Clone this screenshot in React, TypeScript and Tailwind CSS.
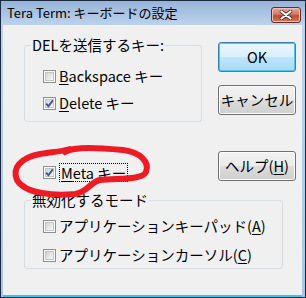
import React from "react";

const font = "font-['Noto_Sans_CJK_JP','Noto_Sans',sans-serif]";

// Windows 7 style checkbox
const Check: React.FC<{ checked?: boolean }> = ({ checked }) => (
  <span className="relative flex h-[13px] w-[13px] shrink-0 items-center justify-center border border-[#8e8f8f] bg-white">
    <span className="h-[9px] w-[9px] border border-[#c4c4c4] bg-[linear-gradient(135deg,#d4d4d4,#f7f7f7)]" />
    {checked && (
      <svg className="absolute left-0 top-0" width="11" height="11" viewBox="0 0 11 11">
        <path d="M2.2 5.6 L4.4 8.2 L8.8 2.4" fill="none" stroke="#3b56a0" strokeWidth="1.9" />
      </svg>
    )}
  </span>
);

const Row: React.FC<{ checked?: boolean; className?: string; children: React.ReactNode }> = ({
  checked,
  className,
  children,
}) => (
  <div className={`flex h-[18px] items-center gap-[3px] pl-[18px] ${className ?? ""}`}>
    <Check checked={checked} />
    <span className="whitespace-nowrap leading-[18px]">{children}</span>
  </div>
);

const Btn: React.FC<{ primary?: boolean; className?: string; children: React.ReactNode }> = ({
  primary,
  className,
  children,
}) => (
  <button
    className={
      primary
        ? `h-[30px] w-[78px] rounded-[3px] border border-[#3c7fb1] bg-[linear-gradient(#eaf6fd,#d9f0fc_50%,#bee6fd_50%,#a7d9f5)] shadow-[inset_0_0_0_1px_#48c6f5] text-[14.5px] leading-[28px] text-black ${className ?? ""}`
        : `h-[30px] w-[78px] rounded-[3px] border border-[#707070] bg-[linear-gradient(#f2f2f2,#ebebeb_50%,#dddddd_50%,#cfcfcf)] shadow-[inset_0_0_0_1px_#fcfcfc] text-[14.5px] leading-[28px] text-black ${className ?? ""}`
    }
  >
    {children}
  </button>
);

export default function App() {
  return (
    <div
      className={`relative flex h-[298px] w-[306px] flex-col border border-[#1b2a3e] bg-[linear-gradient(#97b3d8,#bcd3ec_24px,#a9c6e6)] text-[14.5px] font-normal text-black ${font}`}
    >
      {/* Title bar */}
      <div className="flex h-[24px] shrink-0 items-center justify-between pl-[6px] pr-[4px]">
        <span className="text-[13px] leading-[16px] text-black">Tera Term: キーボードの設定</span>
        <div className="mt-[3px] flex h-[16px] w-[30px] items-center justify-center rounded-[3px] border border-[#6b2a24] bg-[linear-gradient(#e9a99c,#d27a68_45%,#c04a36_55%,#d07a5e)] shadow-[inset_0_0_0_1px_#f0c0b4]">
          <svg width="14" height="10" viewBox="0 0 14 10">
            <path d="M2.5 1.5 L11.5 8.5 M11.5 1.5 L2.5 8.5" stroke="#5a2a24" strokeWidth="3.6" strokeLinecap="round" />
            <path d="M2.5 1.5 L11.5 8.5 M11.5 1.5 L2.5 8.5" stroke="#ffffff" strokeWidth="2.2" strokeLinecap="round" />
          </svg>
        </div>
      </div>

      {/* Client area */}
      <div className="ml-[2px] mr-[3px] flex-1 border-b-2 border-[#38c4ec] bg-[#f0f0f0]">
        <div className="flex pl-[21px] pt-[13px]">
          <div className="flex flex-col">
            <fieldset className="w-[178px] rounded-[3px] border border-[#d5dfe5] pb-[9px]">
              <legend className="ml-[6px] px-[1px] leading-[14px]">DELを送信するキー:</legend>
              <Row className="mt-[15px]">
                <span className="underline underline-offset-2">B</span>ackspace キー
              </Row>
              <Row checked className="mt-[9px]">
                <span className="underline underline-offset-2">D</span>elete キー
              </Row>
            </fieldset>
            <div className="mt-[41px] flex h-[19px] items-center gap-[3px] pl-[19px]">
              <Check checked />
              <span className="whitespace-nowrap border border-dotted border-black px-[1px] leading-[17px]">
                <span className="underline underline-offset-2">M</span>eta キー
              </span>
            </div>
          </div>
          <div className="ml-[16px] mt-[4px] flex flex-col">
            <Btn primary>OK</Btn>
            <Btn className="mt-[13px]">キャンセル</Btn>
            <Btn className="mt-[36px]">
              ヘルプ(<span className="underline underline-offset-2">H</span>)
            </Btn>
          </div>
        </div>

        <fieldset className="ml-[21px] mt-[11px] w-[259px] rounded-[3px] border border-[#d5dfe5] pb-[4px]">
          <legend className="ml-[6px] px-[1px] leading-[14px]">無効化するモード</legend>
          <Row className="mt-[10px]">
            アプリケーションキーパッド(<span className="underline underline-offset-2">A</span>)
          </Row>
          <Row className="mt-[11px]">
            アプリケーションカーソル(<span className="underline underline-offset-2">C</span>)
          </Row>
        </fieldset>
      </div>

      {/* Red hand-drawn marking */}
      <svg className="pointer-events-none absolute left-[-1px] top-[-1px]" width="306" height="298" viewBox="0 0 306 298">
        <path
          d="M65 152 C75 146, 100 148, 123 150 C140 152, 150 162, 146 172 C142 180, 120 178, 100 180 C90 182, 88 192, 75 194 C55 196, 25 194, 17 180 C12 168, 20 158, 40 154 C50 152, 60 152, 70 149"
          fill="none"
          stroke="#ed1c24"
          strokeWidth="6"
          strokeLinecap="round"
          strokeLinejoin="round"
        />
      </svg>
    </div>
  );
}
